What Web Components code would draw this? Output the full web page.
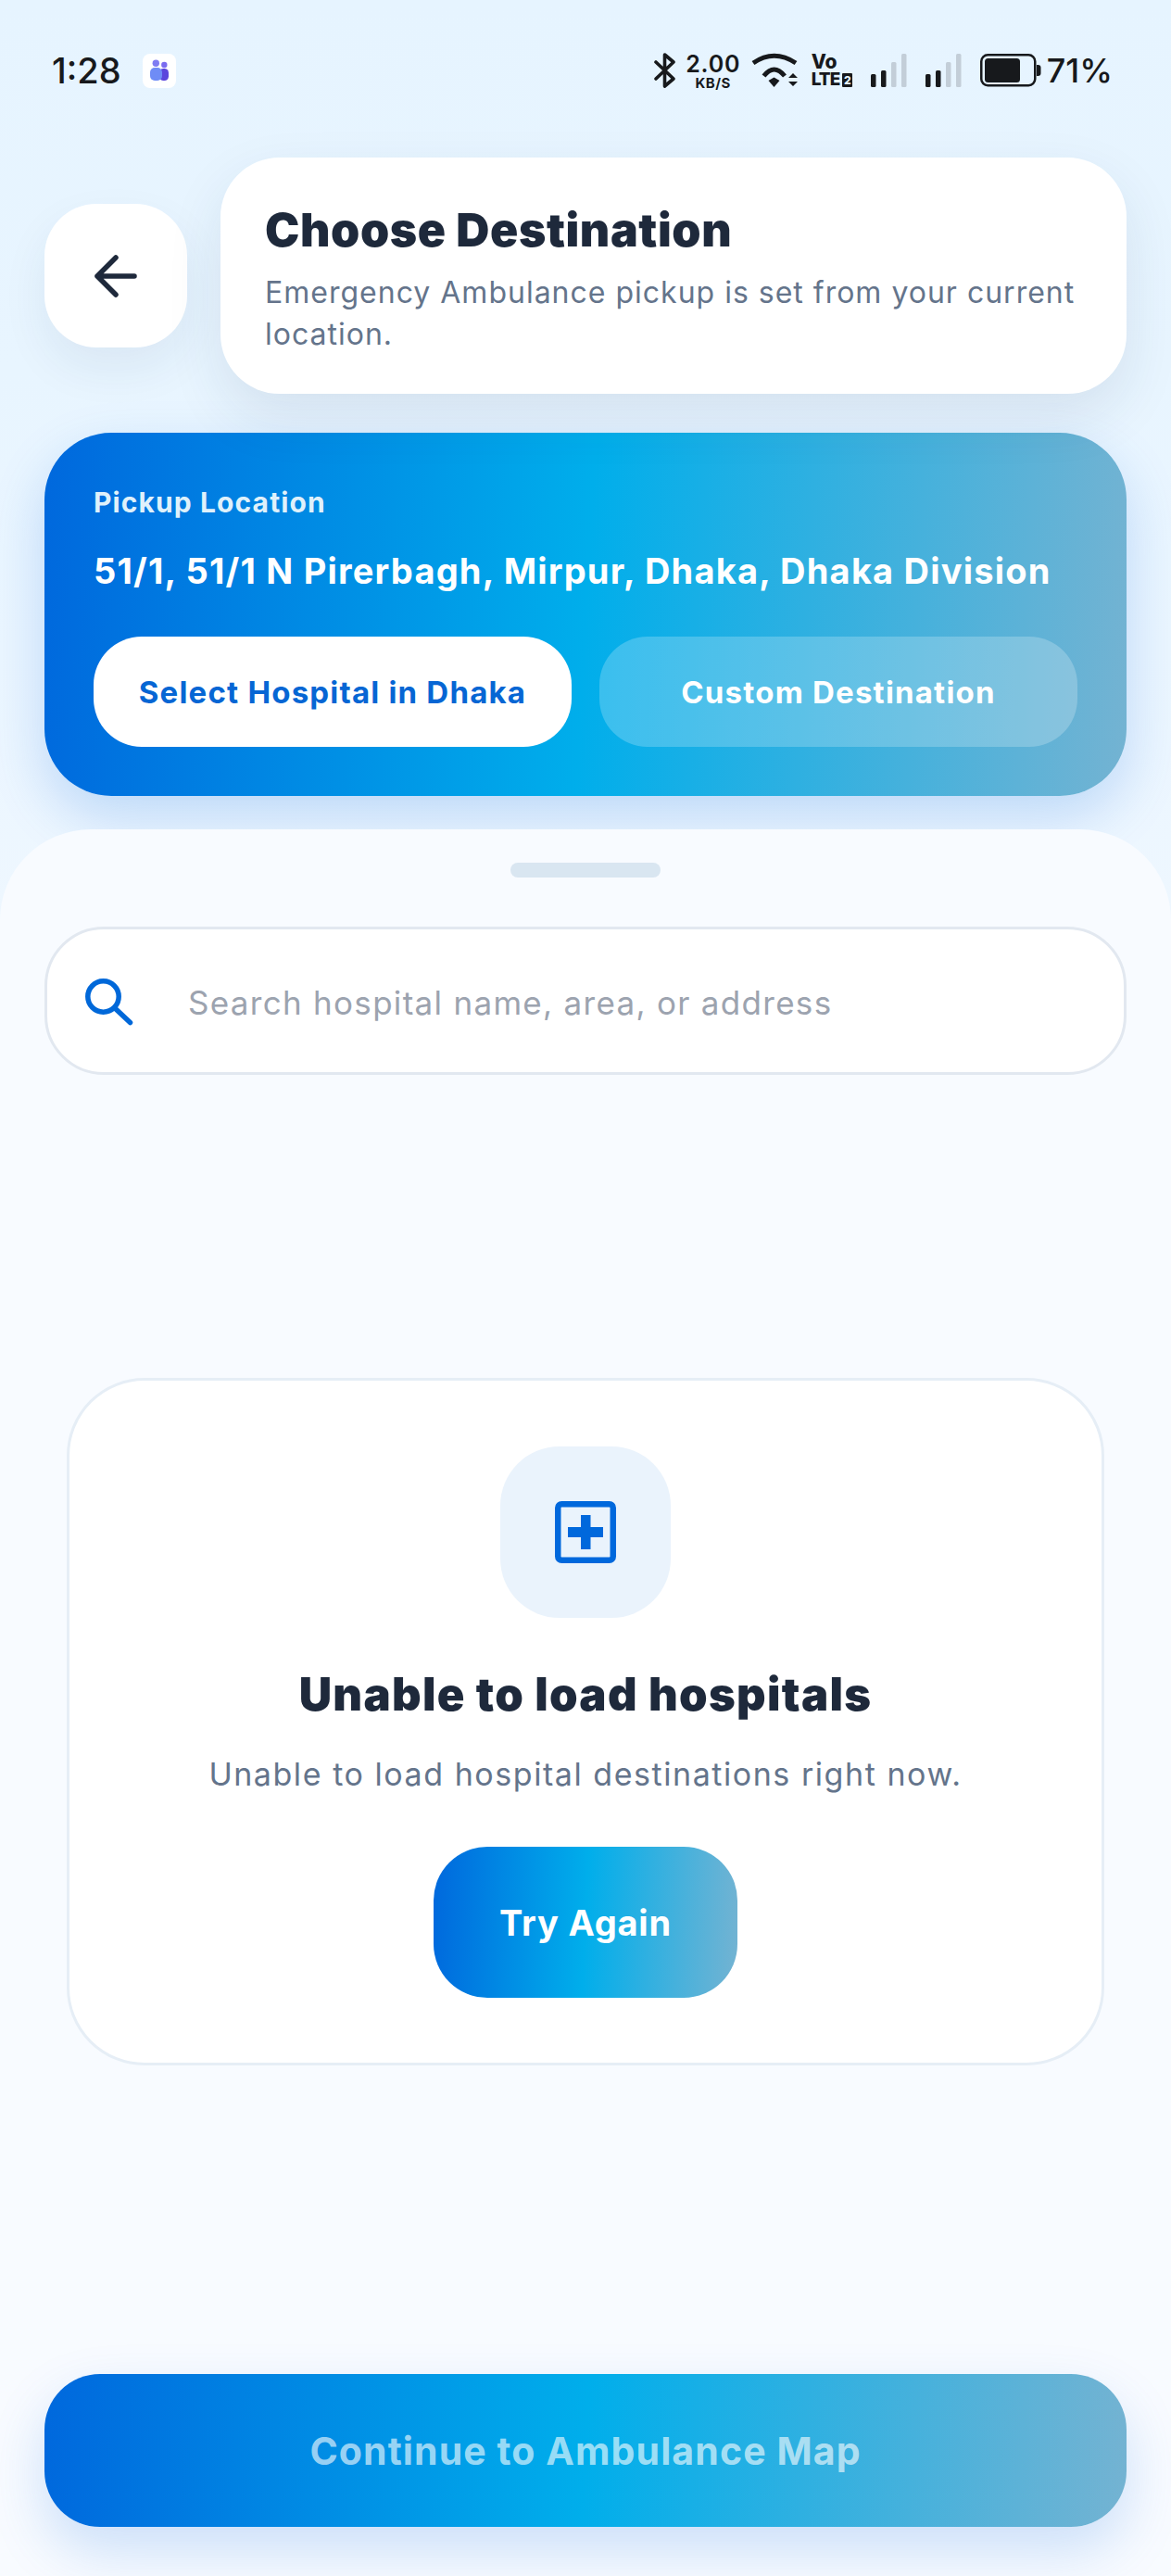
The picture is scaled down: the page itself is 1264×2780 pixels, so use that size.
<!DOCTYPE html>
<html><head><meta charset="utf-8">
<style>
html,body{margin:0;padding:0}
body{width:1264px;height:2780px;overflow:hidden;background:#f8fbff;font-family:Inter,"Noto Sans",sans-serif}
</style></head><body>
<destination-screen>
  <status-bar slot="status"></status-bar>
  <page-header slot="top"></page-header>
  <pickup-card slot="top"></pickup-card>
  <destination-sheet slot="sheet">
    <search-box></search-box>
    <error-card></error-card>
    <grad-button class="main" label="Continue to Ambulance Map"></grad-button>
  </destination-sheet>
</destination-screen>
<script>
function def(name, html){
  customElements.define(name, class extends HTMLElement{
    constructor(){super();this.attachShadow({mode:'open'}).innerHTML=html;}
    connectedCallback(){const l=this.getAttribute('label');const s=this.shadowRoot.querySelector('[data-label]');if(s&&l)s.textContent=l;}
  });
}
const GRAD='linear-gradient(93deg,#0068dd 0%,#00aeeb 50%,#74b3d2 100%)';
const SIG='<rect x="0" y="23" width="5.500" height="14" rx="1.500" fill="#17191c"/><rect x="11" y="19" width="5.500" height="18" rx="1.500" fill="#17191c"/><rect x="22" y="10" width="5.500" height="27" rx="1.500" fill="#c3ced8"/><rect x="33" y="1" width="5.500" height="36" rx="1.500" fill="#c3ced8"/>';
def('destination-screen',`<style>
:host{display:flex;flex-direction:column;width:1264px;height:2780px;background:linear-gradient(180deg,#e6f4ff 0%,#e8f5ff 400px,#eef7ff 1000px)}
.top{display:flex;flex-direction:column;padding:0 48px}
</style><slot name="status"></slot><div class="top"><slot name="top"></slot></div><slot name="sheet"></slot>`);

def('status-bar',`<style>
:host{display:flex;align-items:center;height:170px;box-sizing:border-box;padding:0 63px 18px 56px;color:#17191c;font-family:Inter,sans-serif;position:relative;z-index:2}
.time{font-size:38px;font-weight:500;letter-spacing:0;width:98px}
.app{width:36px;height:37px;background:#fff;border-radius:8px;display:block}
.sp{flex:1}
.r{display:flex;align-items:center}
.speed{display:flex;flex-direction:column;align-items:center;width:58px;margin:0 12px;line-height:1}
.speed b{font-size:25px;font-weight:600;letter-spacing:.8px;height:26px;line-height:25px}
.speed i{font-style:normal;font-size:15px;font-weight:700;height:13px;line-height:13px;letter-spacing:.5px}
.lte{display:flex;flex-direction:column;width:46px;margin:0 18px 0 14px;line-height:1}
.lte b{font-size:21px;font-weight:800;height:20px;line-height:20px}
.lte span{display:flex;align-items:center;font-size:19px;font-weight:800;letter-spacing:-1px;height:18px;line-height:18px}
.lte u{text-decoration:none;display:inline-block;width:11px;height:15px;margin-left:3px;background:#17191c;color:#e6f4ff;font-size:12px;line-height:15px;text-align:center;letter-spacing:0;border-radius:1px}
.pct{font-size:36px;font-weight:500;letter-spacing:0;margin-left:6px}
svg{display:block}
</style>
<span class="time">1:28</span>
<svg class="app" width="36" height="37" viewBox="0 0 36 37"><circle cx="23.300" cy="12" r="3.200" fill="#7a6cf0"/><rect x="18" y="16" width="10" height="13" rx="4.500" fill="#5b45dc"/><circle cx="14.300" cy="10.300" r="3.700" fill="#7f7cf2"/><rect x="8" y="15" width="13" height="14" rx="5" fill="#6f8cf6"/></svg>
<span class="sp"></span>
<div class="r">
<svg width="23" height="38" viewBox="0 0 23 38"><path d="M2 10l19 18-9.500 8V2L21 10 2 28" fill="none" stroke="#17191c" stroke-width="3.600" stroke-linejoin="round" stroke-linecap="round"/></svg>
<div class="speed"><b>2.00</b><i>KB/S</i></div>
<svg width="51" height="38" viewBox="0 0 51 38"><g fill="none" stroke="#17191c" stroke-width="5"><path d="M2 11Q24.500-4.500 48 11"/><path d="M13.500 25Q24.500 11 36 25"/></g><path d="M18.500 30l6-3.500 6 3.500-6 7z" fill="#17191c"/><path d="M40 27l5-5 5 5zM40 31h10l-5 5z" fill="#17191c"/></svg>
<div class="lte"><b>Vo</b><span>LTE<u>2</u></span></div>
<svg width="40" height="38" viewBox="0 0 40 38">${SIG}</svg>
<svg style="margin-left:19px" width="40" height="38" viewBox="0 0 40 38">${SIG}</svg>
<svg style="margin-left:19px" width="66" height="36" viewBox="0 0 66 36"><rect x="1.250" y="1.250" width="58" height="33" rx="7" fill="none" stroke="#17191c" stroke-width="2.500"/><rect x="5" y="5" width="38" height="26" rx="3.500" fill="#17191c"/><path d="M61 12h1.500a3 3 0 0 1 3 3v6a3 3 0 0 1-3 3H61z" fill="#17191c"/></svg>
<span class="pct">71%</span>
</div>`);

def('page-header',`<style>
:host{display:flex;align-items:center;gap:36px;height:255px;position:relative}
.back{width:154px;height:155px;flex:none;background:#fff;border-radius:56px;display:flex;align-items:center;justify-content:center;box-shadow:0 22px 50px rgba(30,60,100,.07)}
.card{flex:1;height:255px;box-sizing:border-box;background:#fff;border-radius:64px;padding:47px 48px 0;box-shadow:0 24px 60px rgba(30,60,100,.1)}
h1{margin:0;font:900 50px/62px Inter,sans-serif;letter-spacing:.6px;color:#1e293b;white-space:nowrap}
p{margin:15px 0 0;font:400 32px/44.500px Inter,sans-serif;letter-spacing:1px;color:#64748b}
</style>
<div class="back"><svg width="46" height="46" viewBox="0 0 46 46"><path d="M23 3L3 23l20 20M3 23h40" fill="none" stroke="#1e293b" stroke-width="5.500" stroke-linecap="round" stroke-linejoin="round"/></svg></div>
<div class="card"><h1>Choose Destination</h1><p>Emergency Ambulance pickup is set from your current location.</p></div>`);

def('pickup-card',`<style>
:host{display:block;margin-top:42px;height:392px;box-sizing:border-box;padding:55px 53px 0;border-radius:72px;background:${GRAD};box-shadow:0 24px 60px rgba(0,102,221,.2);color:#fff}
.l{font:700 30px/40px Inter,sans-serif;color:#dff1fb;letter-spacing:1.100px}
.a{margin-top:28px;font:700 38px/52px Inter,sans-serif;letter-spacing:1.200px;white-space:nowrap}
.b{display:flex;gap:30px;margin-top:45px}
.b div{flex:1;height:119px;border-radius:52px;display:flex;align-items:center;justify-content:center;font:700 33px/44px Inter,sans-serif;letter-spacing:1.200px}
.w{background:#fff;color:#0666d4}
.g{background:rgba(255,255,255,.22);color:#fff}
</style>
<div class="l">Pickup Location</div>
<div class="a">51/1, 51/1 N Pirerbagh, Mirpur, Dhaka, Dhaka Division</div>
<div class="b"><div class="w">Select Hospital in Dhaka</div><div class="g">Custom Destination</div></div>`);

def('destination-sheet',`<style>
:host{display:flex;flex-direction:column;flex:1;margin-top:36px;padding:36px 48px 53px;background:#f8fbff;border-radius:98px 98px 0 0;position:relative}
.h{width:162px;height:16px;border-radius:8px;background:#d9e6f1;align-self:center;flex:none}
</style><div class="h"></div><slot></slot>`);

def('search-box',`<style>
:host{display:flex;align-items:center;margin-top:53px;height:160px;box-sizing:border-box;border:3px solid #e2e8f0;border-radius:64px;background:#fff;padding-left:41px;flex:none}
span{font:400 35px/48px Inter,sans-serif;color:#9ca3af;letter-spacing:1.300px;margin:3px 0 0 59px}
svg{margin-top:2px}
</style><svg width="52" height="51" viewBox="0 0 52 51"><circle cx="19.500" cy="19.500" r="16.700" fill="none" stroke="#0068d9" stroke-width="5.500"/><path d="M32 32l16.500 15.500" stroke="#0068d9" stroke-width="5.500" stroke-linecap="round"/></svg><span>Search hospital name, area, or address</span>`);

def('error-card',`<style>
:host{display:flex;flex-direction:column;align-items:center;flex:none;margin:327px 24px 0;height:742px;box-sizing:border-box;border:3px solid #e6eef6;border-radius:84px;background:#fff;padding-top:71px}
.i{width:184px;height:185px;border-radius:64px;background:#eaf3fc;display:flex;align-items:center;justify-content:center}
h2{margin:51px 0 0;font:900 49px/64px Inter,sans-serif;color:#1e293b;letter-spacing:1.300px}
p{margin:30px 0 0;font:400 34px/48px Inter,sans-serif;color:#64748b;letter-spacing:1.550px}
.t{margin-top:54px;width:328px;height:163px;border-radius:58px;background:${GRAD};color:#fff;display:flex;align-items:center;justify-content:center;font:700 38px/46px Inter,sans-serif;letter-spacing:.8px}
</style><div class="i"><svg width="66" height="67" viewBox="0 0 66 67"><rect x="3.250" y="3.250" width="59.500" height="60.500" rx="4" fill="none" stroke="#0068dc" stroke-width="6.500"/><path d="M28 15h10.500v13H52v11H38.500v13H28V39H14V28h14z" fill="#0068dc"/></svg></div>
<h2>Unable to load hospitals</h2><p>Unable to load hospital destinations right now.</p><div class="t">Try Again</div>`);

def('grad-button',`<style>
:host{display:flex;align-items:center;justify-content:center;margin-top:auto;height:165px;flex:none;border-radius:60px;background:${GRAD};box-shadow:0 26px 60px rgba(0,102,221,.18)}
span{font:700 41px/56px Inter,sans-serif;color:rgba(255,255,255,.62);letter-spacing:1.100px}
</style><span data-label></span>`);
</script>
</body></html>
